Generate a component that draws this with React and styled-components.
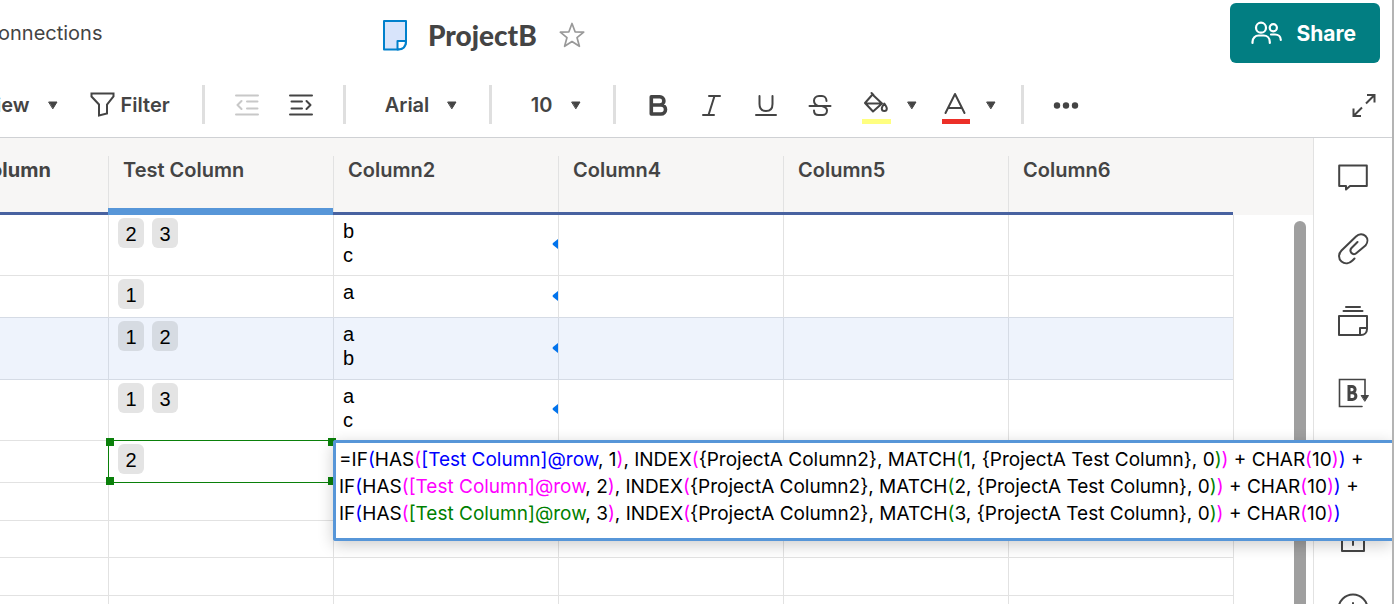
import React from "react";
import styled, { createGlobalStyle } from "styled-components";

const palette = {
  text: "#444444",
  muted: "#c8c8c8",
  line: "#e2e2e2",
  toolbarLine: "#cfd1d4",
  headBg: "#f7f6f5",
  headLine: "#4862a0",
  accent: "#5796d8",
  activeRow: "#eef3fc",
  activeLine: "#d5dbe5",
  chip: "#e4e4e4",
  activeChip: "#d6dbe2",
  share: "#027e82",
  range: "#0a800a",
  link: "#0273ec",
  blue: "#0000ff",
  pink: "#ff00ff",
  green: "#008000",
};

const GlobalStyle = createGlobalStyle`
  *, *::before, *::after {
    box-sizing: border-box;
  }
  body {
    margin: 0;
    background: #fff;
    color: ${palette.text};
    font-family: Inter, "Liberation Sans", sans-serif;
    font-size: 20px;
  }
  button, select {
    font: inherit;
    color: inherit;
    background: none;
    border: 0;
    padding: 0;
    cursor: pointer;
  }
  svg {
    display: block;
    flex: none;
  }
`;

const Page = styled.div`
  display: flex;
  flex-direction: column;
  height: 100vh;
  overflow: hidden;
  border-right: 2px solid #b4b4b4;
`;

const TopBar = styled.header`
  display: flex;
  align-items: center;
  height: 72px;
  flex: none;
  padding: 0 12px 6px 0;
`;

const NavLink = styled.a`
  width: 104px;
  margin-left: -2px;
  color: inherit;
  text-decoration: none;
`;

const TitleGroup = styled.div`
  display: flex;
  align-items: center;
  gap: 20px;
  margin-left: 280px;
  padding-top: 4px;
`;

const Title = styled.h1`
  margin: 0;
  font-family: Lato, "Liberation Sans", sans-serif;
  font-size: 28px;
  line-height: 32px;
  font-weight: 900;
`;

const ShareBtn = styled.button`
  display: flex;
  align-items: center;
  gap: 14px;
  height: 60px;
  margin-left: auto;
  padding: 0 24px 0 21px;
  border-radius: 6px;
  background: ${palette.share};
  color: #fff;
  font-size: 21px;
  font-weight: 700;
`;

const Toolbar = styled.div`
  display: flex;
  align-items: center;
  height: 66px;
  flex: none;
  padding-right: 16px;
  border-bottom: 1px solid ${palette.toolbarLine};
  font-weight: 600;
`;

const ToolGroup = styled.div`
  display: flex;
  align-items: center;
  gap: ${({ $gap }) => $gap}px;
  padding: 0 ${({ $pad }) => $pad}px;
`;

const Divider = styled.div`
  width: 3px;
  height: 39px;
  background: #dfdfdf;
`;

const ToolBtn = styled.button`
  display: flex;
  align-items: center;
  justify-content: center;
  gap: ${({ $gap = 0 }) => $gap}px;
  min-width: 24px;
  height: 39px;
  color: ${({ disabled }) => (disabled ? palette.muted : "inherit")};
`;

const ViewBtn = styled(ToolBtn)`
  margin-left: -4px;
`;

const StyleBtn = styled(ToolBtn)`
  width: 30px;
`;

const ExpandBtn = styled(ToolBtn)`
  margin-left: auto;
`;

const Picker = styled.div`
  display: grid;
  align-items: center;
  width: ${({ $width }) => $width}px;

  select, svg {
    grid-area: 1 / 1;
  }
  select {
    appearance: none;
    width: 100%;
    height: 39px;
    padding-left: 39px;
  }
  svg {
    justify-self: end;
    margin-right: 32px;
    pointer-events: none;
  }
`;

const Workspace = styled.div`
  display: flex;
  flex: 1;
  min-height: 0;
`;

const GridArea = styled.main`
  position: relative;
  flex: 1;
  min-width: 0;
`;

const Sheet = styled.table`
  width: 100%;
  table-layout: fixed;
  border-collapse: separate;
  border-spacing: 0;
  font-family: "Liberation Sans", Arial, sans-serif;
  color: #000;
`;

const HeadCell = styled.th`
  height: 77px;
  padding: 18px 0 0;
  vertical-align: top;
  text-align: left;
  background: ${palette.headBg};
  border-bottom: ${({ $selected }) =>
    $selected ? `7px solid ${palette.accent}` : `3px solid ${palette.headLine}`};
  font-family: Inter, "Liberation Sans", sans-serif;
  font-weight: ${({ $primary }) => ($primary ? 700 : 600)};
  line-height: 24px;
  color: ${palette.text};
`;

const HeadLabel = styled.div`
  height: ${({ $selected }) => ($selected ? 52 : 56)}px;
  margin-left: ${({ $primary }) => ($primary ? -10 : 0)}px;
  padding: 2px 0 0 ${({ $primary }) => ($primary ? 0 : 14)}px;
  border-left: ${({ $primary }) => ($primary ? "0" : `1px solid ${palette.line}`)};
`;

const HeadFiller = styled.td`
  background: ${palette.headBg};
`;

const Cell = styled.td`
  position: relative;
  padding: 3px 8px 0 9px;
  vertical-align: top;
  line-height: 24px;
  border-left: 1px solid ${palette.line};
  border-bottom: 1px solid ${palette.line};

  &:first-child {
    border-left: 0;
  }
`;

const EdgeCell = styled.td`
  border-left: 1px solid ${palette.line};
`;

const Chip = styled.span`
  width: 26px;
  height: 30px;
  border-radius: 6px;
  background: ${palette.chip};
  line-height: 32px;
  text-align: center;
`;

const Row = styled.tr`
  height: ${({ $height }) => $height}px;

  &:has(+ [aria-selected="true"]) ${Cell}, &[aria-selected="true"] ${Cell} {
    border-bottom-color: ${palette.activeLine};
  }
  &[aria-selected="true"] ${Cell} {
    background: ${palette.activeRow};
    border-left-color: ${palette.activeLine};
  }
  &[aria-selected="true"] ${Chip} {
    background: ${palette.activeChip};
  }
`;

const Chips = styled.div`
  display: flex;
  gap: 8px;
`;

const Line = styled.div`
  padding-top: ${({ $first }) => ($first ? 1 : 0)}px;
`;

const LinkMark = styled.svg`
  position: absolute;
  right: 0;
  top: calc(50% - 6px);
`;

const Range = styled.div`
  position: absolute;
  inset: -1px;
  z-index: 1;
  border: 1px solid ${palette.range};
`;

const Handle = styled.span`
  position: absolute;
  ${({ $y }) => $y}: -3px;
  ${({ $x }) => $x}: -3px;
  width: 8px;
  height: 8px;
  background: ${palette.range};
`;

const Editor = styled.div`
  position: absolute;
  top: -1px;
  left: -1px;
  z-index: 2;
  width: calc(100vw - 335px);
  padding: 3px 0 11px 3px;
  border: 3px solid ${palette.accent};
  border-right: 0;
  border-radius: 3px 0 0 3px;
  background: #fff;
  box-shadow: 0 4px 16px rgba(0, 0, 0, 0.2);
  font-family: Inter, "Liberation Sans", sans-serif;
  font-size: 19px;
  line-height: 27px;
  white-space: pre;
  outline: none;
`;

const Token = styled.span`
  color: ${({ $color }) => palette[$color]};
`;

const ScrollThumb = styled.div`
  position: absolute;
  top: 83px;
  right: 7px;
  bottom: -12px;
  width: 12px;
  border-radius: 6px;
  background: #9f9f9f;
`;

const SidePanel = styled.aside`
  display: flex;
  flex-direction: column;
  width: 79px;
  padding-top: 3px;
  border-left: 1px solid ${palette.line};
  overflow: hidden;
`;

const SideBtn = styled.button`
  display: flex;
  align-items: center;
  justify-content: center;
  height: 72px;
  flex: none;
`;

const Icon = ({ w = 24, h = w, stroke = 2, children, ...rest }) => (
  <svg
    width={w}
    height={h}
    viewBox={`0 0 ${w} ${h}`}
    fill="none"
    stroke="currentColor"
    strokeWidth={stroke}
    strokeLinecap="round"
    strokeLinejoin="round"
    aria-hidden="true"
    {...rest}>
    {children}
  </svg>
);

const Caret = () => (
  <Icon w={10} h={8} stroke={1}>
    <path d="M1 1h8L5 7.500z" fill="currentColor" />
  </Icon>
);

const SheetIcon = () => (
  <Icon w={26} h={32} stroke={2} color="#0080cc">
    <path d="M2 2h22v20.500c0 5-3 8-8 8H2z" fill="#d8e4fb" />
    <path d="M15.500 30.500v-8.500H24C24 27.500 20.500 30.500 15.500 30.500z" fill="#fff" />
  </Icon>
);

const StarIcon = () => (
  <Icon w={26} h={26} stroke={1.7} color="#999">
    <path d="M13 1.500l3.100 8.300 8.600.4-6.700 5.400 2.400 8.700-7.400-4.800-7.400 4.800 2.400-8.700L1.300 10.200l8.600-.4z" />
  </Icon>
);

const PeopleIcon = () => (
  <Icon w={31} h={24} stroke={2.200}>
    <circle cx="10" cy="6.700" r="5" />
    <path d="M1.500 22v-1c0-4 3-6.500 6-6.500h5c3.500 0 6.300 2.500 6.300 6.500v1" />
    <circle cx="22.300" cy="6.700" r="3.600" />
    <path d="M20 13.500h4c3.500 0 5.800 2.500 5.800 5.500" />
  </Icon>
);

const FilterIcon = () => (
  <Icon w={25} h={25}>
    <path d="M1.500 1.500h22v3l-6.500 8v9l-8 2v-11l-7.500-8z" strokeLinejoin="miter" />
  </Icon>
);

const OutdentIcon = () => (
  <Icon>
    <path d="M1 2.500h22M1 21.500h22M12 8.500h10.500M12 15.500h10.500M6.500 8L2.500 12l4 4" />
  </Icon>
);

const IndentIcon = () => (
  <Icon>
    <path d="M1 2.500h22M1 21.500h22M2.500 8.500h10.500M2.500 15.500h10.500M17.500 8l4 4-4 4" />
  </Icon>
);

const BoldIcon = () => (
  <Icon w={22} h={24} stroke={3.600}>
    <path d="M4.300 3.800h8.500a3.900 3.900 0 0 1 0 8.200H4.300zM4.300 12h9.700a4.200 4.200 0 0 1 0 9H4.300z" />
  </Icon>
);

const ItalicIcon = () => (
  <Icon>
    <path d="M9 3h11M3 22h11M14.500 3l-6 19" />
  </Icon>
);

const UnderlineIcon = () => (
  <Icon>
    <path d="M5.500 3v8c0 4.500 2.500 7 6.500 7s6.500-2.500 6.500-7v-8M2 22h20" />
  </Icon>
);

const StrikeIcon = () => (
  <Icon>
    <path d="M1.500 13h21M18.500 8c0-3-2-5-4.500-5h-3c-3 0-5 2-5 4.800 0 2.700 1.500 4.200 4 5.200h4c3.500 1 5 2 5 4.500s-2 4.500-4.500 4.500h-4c-3 0-4.500-2-4.500-4.500" />
  </Icon>
);

const FillIcon = () => (
  <Icon w={29} h={38}>
    <path d="M10.500 8.500L3 17l8 8.500L20 17.500z M9.500 7l2 2M4 17.500h15" />
    <path d="M22.300 17.500c-1.700 2.500-2.500 3.700-2.500 5a2.500 2.500 0 0 0 5 0c0-1.300-.8-2.500-2.500-5z" />
    <path d="M0 35.500h29" stroke="#ffff80" strokeWidth="5" strokeLinecap="butt" />
  </Icon>
);

const TextColorIcon = () => (
  <Icon w={28} h={38}>
    <path d="M3.500 27L13 8l9.500 19M6 22h14" />
    <path d="M0 35.500h28" stroke="#ec2f28" strokeWidth="5" strokeLinecap="butt" />
  </Icon>
);

const DotsIcon = () => (
  <Icon w={26} h={8} stroke={0}>
    <g fill="currentColor">
      <circle cx="4" cy="4.500" r="3.200" />
      <circle cx="13" cy="4.500" r="3.200" />
      <circle cx="22" cy="4.500" r="3.200" />
    </g>
  </Icon>
);

const ExpandIcon = () => (
  <Icon>
    <path d="M15 2h7.500v7.500M22 2.500l-8 8M1.500 15.500V23H9M2 22.500l8-8" strokeLinecap="butt" strokeLinejoin="miter" />
  </Icon>
);

const CommentIcon = () => (
  <Icon w={30} h={28}>
    <path d="M1.200 2.500h27.600V23H12l-4 3.500V23H1.200z" />
  </Icon>
);

const ClipIcon = () => (
  <Icon w={32} h={32}>
    <path d="M17.500 25.500l-2 2c-3 3-7.500 4-11 1s-3-8 0-11L19 3.500c3-3 7-3 9.500-.5s2.500 6.500 0 9.500L19.500 20c-1.500 1.500-3.700 1.500-5 0s-1.300-3.500 0-5l6-6" />
  </Icon>
);

const ProofIcon = () => (
  <Icon w={32} h={32}>
    <path d="M9 2h14M6.500 6h19M2 11h28v13c0 3.500-2.500 6-6 6H2zM30 23h-7v7" />
  </Icon>
);

const BriefIcon = () => (
  <Icon w={32} h={32}>
    <path d="M28 20V2.500H2.500v27H25" strokeWidth="1.600" strokeLinejoin="miter" />
    <path d="M12 9.500v13h3.500a3.400 3.400 0 0 0 0-6.800H12h3a3.100 3.100 0 0 0 0-6.200z" strokeWidth="3" strokeLinejoin="miter" />
    <path d="M24.500 18.500h7L28 24z" fill="currentColor" strokeWidth="1" />
  </Icon>
);

const FlowIcon = () => (
  <Icon w={32} h={32}>
    <path d="M3 3h9v9H3zM20 20h9v9h-9zM8 12v12h12" />
  </Icon>
);

const UploadIcon = () => (
  <Icon w={26} h={30}>
    <path d="M8 7H2v22h22V7h-6M13 23V2M8 7l5-5 5 5" />
  </Icon>
);

const CircleIcon = () => (
  <Icon w={32} h={32}>
    <circle cx="16" cy="16" r="14.500" />
    <path d="M16 10v12M10 16h12" />
  </Icon>
);

const sideTools = [
  { name: "Conversations", Glyph: CommentIcon },
  { name: "Attachments", Glyph: ClipIcon },
  { name: "Proofs", Glyph: ProofIcon },
  { name: "Brandfolder", Glyph: BriefIcon },
  { name: "Update requests", Glyph: FlowIcon },
  { name: "Publish", Glyph: UploadIcon },
  { name: "Activity log", Glyph: CircleIcon },
];

const columns = ["Test Column", "Column2", "Column4", "Column5", "Column6"];

const rows = [
  { height: 61, tags: [2, 3], lines: ["b", "c"] },
  { height: 42, tags: [1], lines: ["a"] },
  { height: 62, tags: [1, 2], lines: ["a", "b"], active: true },
  { height: 61, tags: [1, 3], lines: ["a", "c"] },
  { height: 42, tags: [2], editing: true },
  { height: 38 },
  { height: 37 },
  { height: 38 },
  { height: 38 },
];

const formula = [
  { value: 1, color: "blue", prefix: "=", suffix: " +" },
  { value: 2, color: "pink", prefix: "", suffix: " +" },
  { value: 3, color: "green", prefix: "", suffix: "" },
];

const FormulaLine = ({ value, color, prefix, suffix }) => (
  <div>
    {prefix}IF<Token $color="blue">(</Token>HAS<Token $color="pink">(</Token>
    <Token $color={color}>[Test Column]@row</Token>, {value}
    <Token $color="pink">)</Token>, INDEX<Token $color="pink">(</Token>
    {"{ProjectA Column2}, MATCH"}<Token $color="green">(</Token>
    {value}{", {ProjectA Test Column}, 0"}<Token $color="green">)</Token>
    <Token $color="pink">)</Token> + CHAR<Token $color="pink">(</Token>10
    <Token $color="pink">)</Token><Token $color="blue">)</Token>{suffix}
  </div>
);

const SheetRow = ({ height, tags = [], lines = [], active, editing }) => (
  <Row $height={height} aria-selected={active ? "true" : undefined}>
    <Cell />
    <Cell>
      <Chips>
        {tags.map((tag) => <Chip key={tag}>{tag}</Chip>)}
      </Chips>
      {editing && (
        <Range>
          <Handle $y="top" $x="left" />
          <Handle $y="top" $x="right" />
          <Handle $y="bottom" $x="left" />
          <Handle $y="bottom" $x="right" />
        </Range>
      )}
    </Cell>
    <Cell>
      {lines.map((line, i) => <Line key={line} $first={i === 0}>{line}</Line>)}
      {lines.length > 0 && (
        <LinkMark width="6" height="10" viewBox="0 0 6 10" fill={palette.link} aria-hidden="true">
          <path d="M6 0L1 4q-1 1 0 2L6 10z" />
        </LinkMark>
      )}
      {editing && (
        <Editor
          role="textbox"
          aria-label="Formula"
          aria-multiline="true"
          contentEditable
          suppressContentEditableWarning
          spellCheck={false}>
          {formula.map((line) => <FormulaLine key={line.value} {...line} />)}
        </Editor>
      )}
    </Cell>
    <Cell />
    <Cell />
    <Cell />
    <EdgeCell />
  </Row>
);

const App = () => (
  <Page>
    <GlobalStyle />
    <TopBar>
      <NavLink href="#connections">onnections</NavLink>
      <TitleGroup>
        <SheetIcon />
        <Title>ProjectB</Title>
        <StyleBtn aria-label="Favorite"><StarIcon /></StyleBtn>
      </TitleGroup>
      <ShareBtn><PeopleIcon />Share</ShareBtn>
    </TopBar>
    <Toolbar>
      <ViewBtn $gap={18}>iew<Caret /></ViewBtn>
      <ToolGroup $gap={0} $pad={32}>
        <ToolBtn $gap={6}><FilterIcon />Filter</ToolBtn>
      </ToolGroup>
      <Divider />
      <ToolGroup $gap={30} $pad={30}>
        <ToolBtn aria-label="Outdent" disabled><OutdentIcon /></ToolBtn>
        <ToolBtn aria-label="Indent"><IndentIcon /></ToolBtn>
      </ToolGroup>
      <Divider />
      <Picker $width={143}>
        <select aria-label="Font"><option>Arial</option></select>
        <Caret />
      </Picker>
      <Divider />
      <Picker $width={121}>
        <select aria-label="Font size"><option>10</option></select>
        <Caret />
      </Picker>
      <Divider />
      <ToolGroup $gap={24} $pad={27}>
        <StyleBtn aria-label="Bold"><BoldIcon /></StyleBtn>
        <StyleBtn aria-label="Italic"><ItalicIcon /></StyleBtn>
        <StyleBtn aria-label="Underline"><UnderlineIcon /></StyleBtn>
        <StyleBtn aria-label="Strikethrough"><StrikeIcon /></StyleBtn>
      </ToolGroup>
      <ToolBtn $gap={16} aria-label="Fill color"><FillIcon /><Caret /></ToolBtn>
      <ToolGroup $gap={0} $pad={25}>
        <ToolBtn $gap={16} aria-label="Text color"><TextColorIcon /><Caret /></ToolBtn>
      </ToolGroup>
      <Divider />
      <ToolGroup $gap={0} $pad={29}>
        <ToolBtn aria-label="More"><DotsIcon /></ToolBtn>
      </ToolGroup>
      <ExpandBtn aria-label="Full screen"><ExpandIcon /></ExpandBtn>
    </Toolbar>
    <Workspace>
      <GridArea>
        <Sheet>
          <colgroup>
            <col width="108" />
            {columns.map((name) => <col key={name} width="225" />)}
            <col />
          </colgroup>
          <thead>
            <tr>
              <HeadCell $primary><HeadLabel $primary>olumn</HeadLabel></HeadCell>
              {columns.map((name, i) => (
                <HeadCell key={name} $selected={i === 0}>
                  <HeadLabel $selected={i === 0}>{name}</HeadLabel>
                </HeadCell>
              ))}
              <HeadFiller />
            </tr>
          </thead>
          <tbody>
            {rows.map((row, i) => <SheetRow key={i} {...row} />)}
          </tbody>
        </Sheet>
        <ScrollThumb />
      </GridArea>
      <SidePanel>
        {sideTools.map(({ name, Glyph }) => (
          <SideBtn key={name} aria-label={name}><Glyph /></SideBtn>
        ))}
      </SidePanel>
    </Workspace>
  </Page>
);

export default App;
